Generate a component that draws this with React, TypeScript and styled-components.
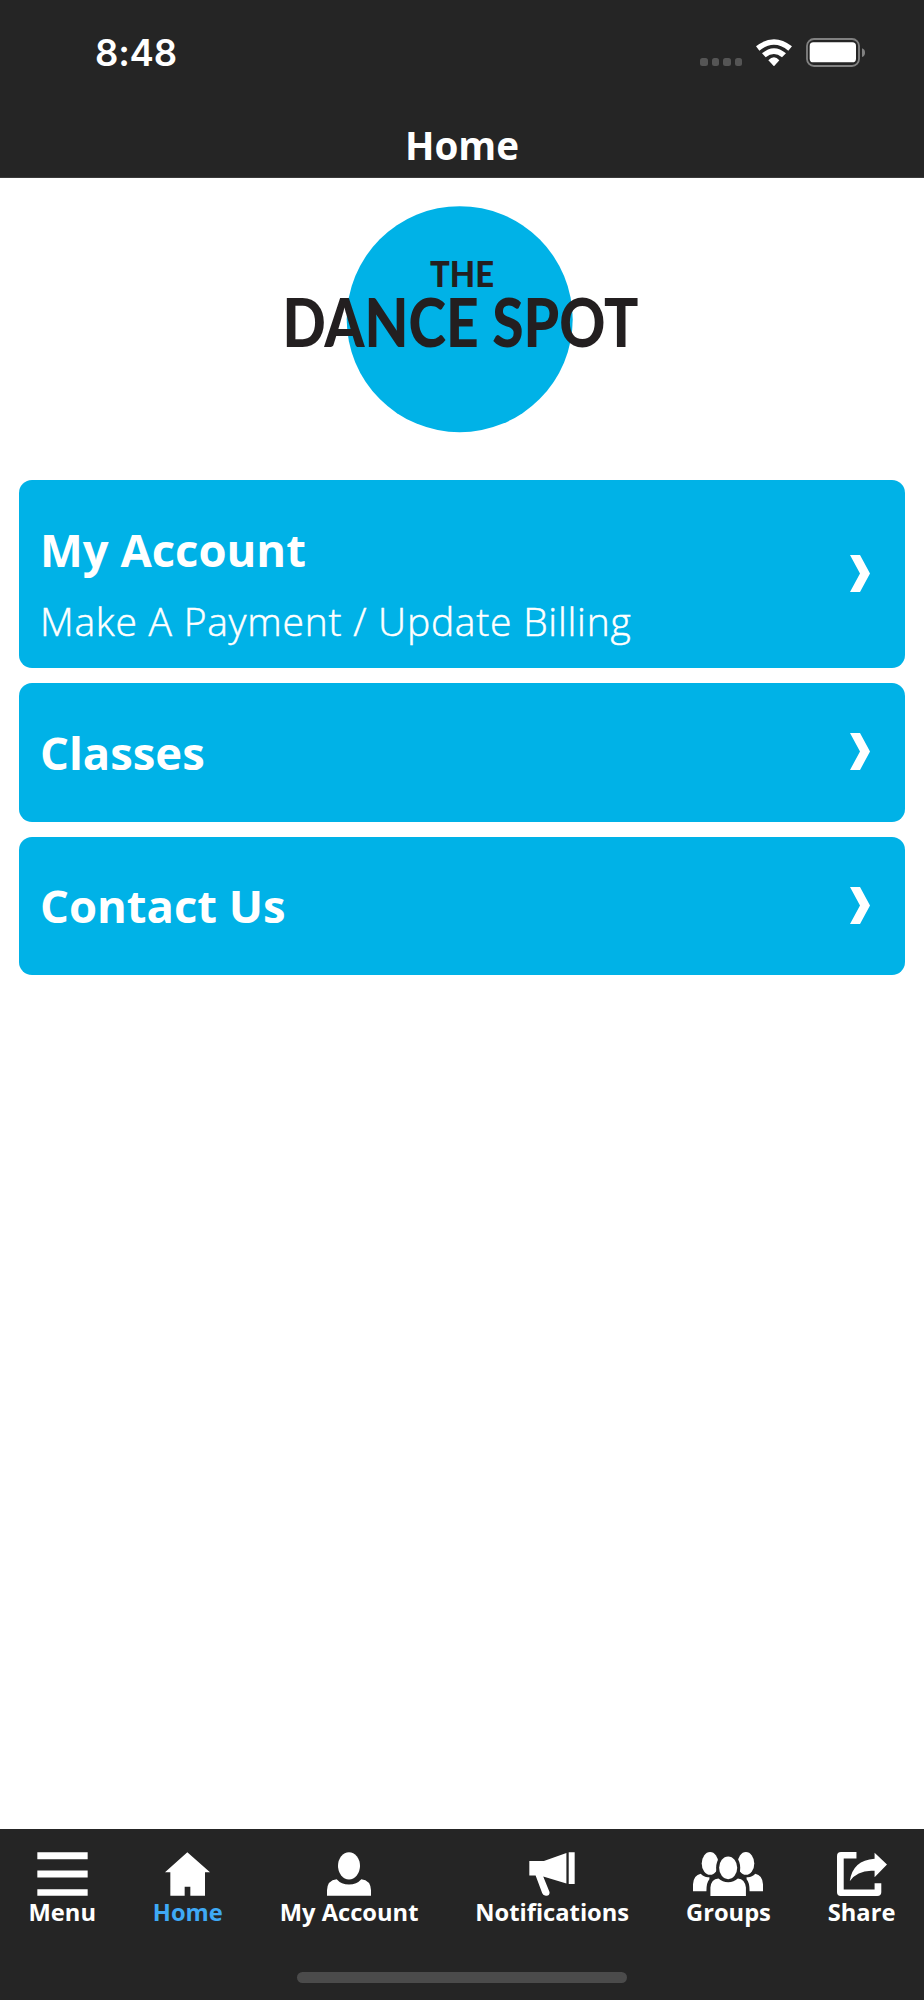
import React from 'react';
import styled, { createGlobalStyle } from 'styled-components';

const INK = '#252525';
const CYAN = '#00b2e7';

const GlobalStyle = createGlobalStyle`
  html, body { margin: 0; background: #fff; }
  * { box-sizing: border-box; }
  svg { display: block; flex: none; }
`;

const Screen = styled.div`
  width: 924px;
  height: 2000px;
  display: flex;
  flex-direction: column;
  background: #fff;
  font-family: 'Open Sans', 'Noto Sans', sans-serif;
  color: #fff;
  overflow: hidden;
`;

const Header = styled.header`
  height: 178px;
  flex: none;
  background: ${INK};
  border-bottom: 1px solid #3a3a3a;
`;

const StatusBar = styled.div`
  height: 105px;
  display: flex;
  align-items: center;
  justify-content: space-between;
  padding: 0 59px 0 95px;
`;

const Clock = styled.time`
  font: 580 36.5px/44px Inter, sans-serif;
  letter-spacing: -0.2px;
`;

const StatusIcons = styled.div`
  display: flex;
  align-items: center;
  gap: 14px;
`;

const SignalDots = styled.div`
  display: flex;
  gap: 4px;
  margin-top: 19px;
`;

const Dot = styled.span`
  width: 7.5px;
  height: 8px;
  border-radius: 2.5px;
  background: #555;
`;

const Title = styled.h1`
  margin: 0;
  padding-top: 14px;
  font-size: 38.6px;
  line-height: 53px;
  font-weight: 700;
  text-align: center;
`;

const Main = styled.main`
  flex: 1;
  padding: 28px 19px 0;
`;

const Logo = styled.svg`
  margin: 0 auto 48px;
  overflow: visible;
`;

const CardList = styled.div`
  display: flex;
  flex-direction: column;
  gap: 15px;
`;

const Card = styled.a<{ $tall?: boolean }>`
  display: flex;
  align-items: center;
  justify-content: space-between;
  height: ${p => (p.$tall ? '188px' : '138.5px')};
  padding: ${p => (p.$tall ? '16px' : '0')} 35px 0 21px;
  border-radius: 13px;
  background: ${CYAN};

  svg {
    margin-top: ${p => (p.$tall ? '-17px' : '-1px')};
  }
`;

const CardTitle = styled.h2`
  margin: 0;
  font-size: 45.4px;
  line-height: 63px;
  font-weight: 700;
`;

const CardNote = styled.p`
  margin: 13px 0 0;
  font-size: 39px;
  line-height: 53px;
  font-weight: 300;
  letter-spacing: 0.76px;
  -webkit-text-stroke: 0.5px #fff;
`;

const Footer = styled.footer`
  height: 171px;
  flex: none;
  display: flex;
  flex-direction: column;
  align-items: center;
  background: ${INK};
`;

const Tabs = styled.nav`
  width: 100%;
  height: 143px;
  display: flex;
  align-items: flex-start;
  justify-content: space-between;
  padding: 23px 28.5px 0 28.5px;
`;

const Tab = styled.a<{ $active?: boolean }>`
  display: flex;
  flex-direction: column;
  align-items: center;
  font-size: 23.7px;
  line-height: 33px;
  font-weight: 700;
  color: ${p => (p.$active ? '#3fa9f5' : '#fff')};
`;

const TabIcon = styled.svg`
  height: 44px;
  fill: #fff;
`;

const HomeIndicator = styled.div`
  width: 330px;
  height: 11px;
  border-radius: 6px;
  background: #4b4b4b;
`;

const Wifi = () => (
  <svg width="36" height="27.3" viewBox="288 116 108 82" fill="#fff">
    <path d="M288 138Q342 95 396 138L385 151Q342 115 298 151Z" />
    <path d="M306 159Q342 128 378 159L366 171Q342 151 317 171Z" />
    <path d="M325 180Q342 162 358 180L342 198Z" />
  </svg>
);

const Battery = () => (
  <svg width="59" height="29" viewBox="438 113 177 87">
    <rect x="441" y="116" width="156" height="81" rx="21" fill="none" stroke="#818181" strokeWidth="5.5" />
    <rect x="449" y="126" width="139" height="60" rx="11" fill="#fff" />
    <path d="M606 144Q615 147 615 157Q615 167 606 170Z" fill="#818181" />
  </svg>
);

const Chevron = () => (
  <svg width="20" height="37" viewBox="0 0 20 37" fill="#fff">
    <path d="M0 0H10L20 18.5L10 37H0L10 18.5Z" />
  </svg>
);

const LogoWord = styled.text<{ $size: number }>`
  font-family: Lato, sans-serif;
  font-size: ${p => p.$size}px;
  font-weight: 900;
  fill: #231f20;
`;

const cards = [
  { title: 'My Account', note: 'Make A Payment / Update Billing' },
  { title: 'Classes' },
  { title: 'Contact Us' },
];

const tabs = [
  {
    label: 'Menu', box: '111 126 153 131', width: 51,
    art: <path d="M112 126H263V147H112ZM112 181H263V202H112ZM112 237H263V257H112Z" />,
  },
  {
    label: 'Home', box: '495 126 135 131', width: 45, active: true,
    art: <path d="M562 126L630 186H615V257H571V230H554V257H511V186H495Z" />,
  },
  {
    label: 'My Account', box: '261 126 132 131', width: 44,
    art: (
      <>
        <ellipse cx="327" cy="167" rx="33" ry="41" />
        <path d="M261 257V240Q262 210 290 207Q304 223 327 223Q350 223 364 207Q392 210 393 240V257Z" />
      </>
    ),
  },
  {
    label: 'Notifications', box: '207 126 139 131', width: 46,
    art: <path d="M208 152H252L320 128V220L250 199L269 246Q270 257 260 257Q250 258 247 250L227 196H208ZM327 126H345V222H327Z" />,
  },
  {
    label: 'Groups', box: '88 126 209 131', width: 70,
    art: (
      <>
        <ellipse cx="139" cy="160" rx="25" ry="34" />
        <ellipse cx="246" cy="160" rx="25" ry="34" />
        <path d="M88 243V222Q90 195 111 191Q122 203 137 201V207Q128 216 128 243Z" />
        <path d="M297 243V222Q295 195 274 191Q263 203 248 201V207Q257 216 257 243Z" />
        <ellipse cx="193" cy="173" rx="36" ry="44" fill={INK} />
        <ellipse cx="193" cy="173" rx="27" ry="34" />
        <path d="M140 257V232Q142 207 164 205Q176 216 193 216Q210 216 222 205Q243 207 246 232V257Z" />
      </>
    ),
  },
  {
    label: 'Share', box: '518 126 149 131', width: 50,
    art: (
      <>
        <path d="M576 126V145H538V238H630V219H650V246Q650 257 638 257H529Q518 257 518 246V138Q518 126 530 126Z" />
        <path d="M630 128L667 163L630 201V182Q580 178 556 213Q565 150 630 146Z" />
      </>
    ),
  },
];

export default function App() {
  return (
    <Screen>
      <GlobalStyle />
      <Header>
        <StatusBar>
          <Clock>8:48</Clock>
          <StatusIcons>
            <SignalDots><Dot /><Dot /><Dot /><Dot /></SignalDots>
            <Wifi />
            <Battery />
          </StatusIcons>
        </StatusBar>
        <Title>Home</Title>
      </Header>
      <Main>
        <Logo width="376" height="226" viewBox="274 206 376 226">
          <circle cx="459.7" cy="319.2" r="113" fill={CYAN} />
          <LogoWord $size={36} x="430" y="287" textLength="64" lengthAdjust="spacingAndGlyphs">THE</LogoWord>
          <LogoWord $size={66} x="282.5" y="346.7" textLength="356" lengthAdjust="spacingAndGlyphs">DANCE SPOT</LogoWord>
        </Logo>
        <CardList>
          {cards.map(c => (
            <Card key={c.title} $tall={!!c.note}>
              <div>
                <CardTitle>{c.title}</CardTitle>
                {c.note && <CardNote>{c.note}</CardNote>}
              </div>
              <Chevron />
            </Card>
          ))}
        </CardList>
      </Main>
      <Footer>
        <Tabs>
          {tabs.map(t => (
            <Tab key={t.label} $active={t.active}>
              <TabIcon width={t.width} viewBox={t.box}>{t.art}</TabIcon>
              {t.label}
            </Tab>
          ))}
        </Tabs>
        <HomeIndicator />
      </Footer>
    </Screen>
  );
}
